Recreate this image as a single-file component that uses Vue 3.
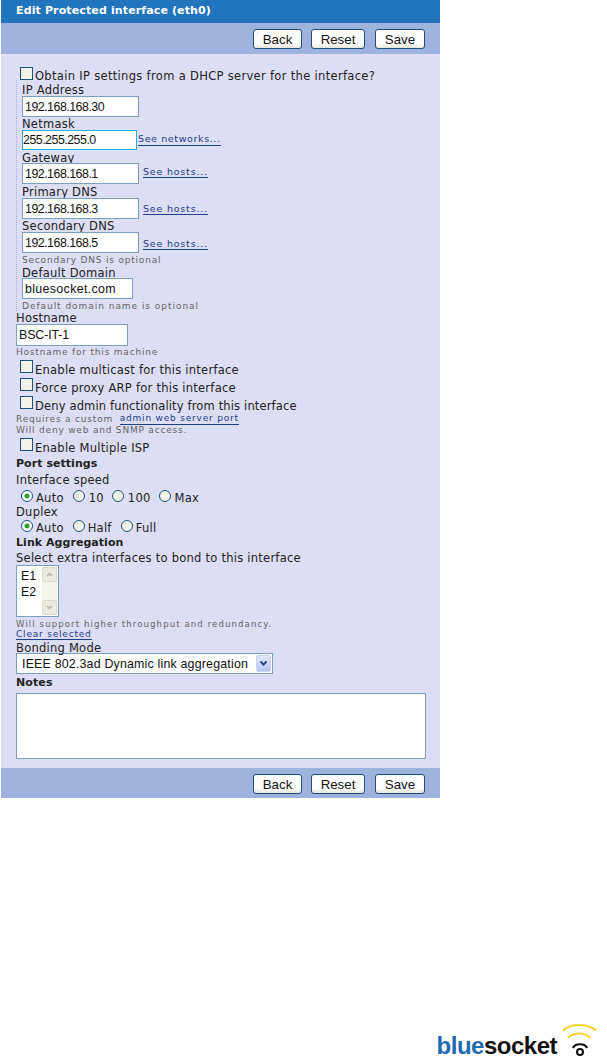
<script setup>
const buttons = ['Back', 'Reset', 'Save']
</script>

<template>
  <div class="page">
    <div class="panel">
      <h1 class="title">Edit Protected interface (eth0)</h1>
      <div class="bar top">
        <button v-for="b in buttons" :key="b" class="btn" :class="'btn-' + b">{{ b }}</button>
      </div>
      <div class="body">
        <label class="check first"><input type="checkbox" /><span>Obtain IP settings from a DHCP server for the interface?</span></label>
        <div class="dotted">
          <div class="lbl h13">IP Address</div>
          <div class="row"><input class="txt ip w117" value="192.168.168.30" /></div>
          <div class="lbl h13">Netmask</div>
          <div class="row"><input class="txt ip w115 focus" value="255.255.255.0" /><a class="link l1">See networks...</a></div>
          <div class="lbl h12">Gateway</div>
          <div class="row"><input class="txt ip w117" value="192.168.168.1" /><a class="link l2 m3">See hosts...</a></div>
          <div class="lbl h14">Primary DNS</div>
          <div class="row"><input class="txt ip w117" value="192.168.168.3" /><a class="link l2 m5">See hosts...</a></div>
          <div class="lbl h13">Secondary DNS</div>
          <div class="row"><input class="txt ip w117" value="192.168.168.5" /><a class="link l2 m6">See hosts...</a></div>
          <div class="hint h13">Secondary DNS is optional</div>
          <div class="lbl h12">Default Domain</div>
          <div class="row"><input class="txt dom w111" value="bluesocket.com" /></div>
          <div class="hint h12 low dense">Default domain name is optional</div>
        </div>
        <div class="lbl h13 out">Hostname</div>
        <input class="txt w112 tall out" value="BSC-IT-1" />
        <div class="hint h12 out">Hostname for this machine</div>
        <label class="check"><input type="checkbox" /><span>Enable multicast for this interface</span></label>
        <label class="check"><input type="checkbox" /><span>Force proxy ARP for this interface</span></label>
        <label class="check deny"><input type="checkbox" /><span>Deny admin functionality from this interface</span></label>
        <div class="hint h11 out gap1">Requires a custom <a class="inline port">admin web server port</a></div>
        <div class="hint h11 out">Will deny web and SNMP access.</div>
        <label class="check isp"><input type="checkbox" /><span>Enable Multiple ISP</span></label>
        <div class="head h17">Port settings</div>
        <div class="lbl h17 out">Interface speed</div>
        <div class="radios four">
          <label><input type="radio" name="s" checked /><span>Auto</span></label>
          <label><input type="radio" name="s" /><span>10</span></label>
          <label><input type="radio" name="s" /><span>100</span></label>
          <label><input type="radio" name="s" /><span>Max</span></label>
        </div>
        <div class="lbl h13 out flat">Duplex</div>
        <div class="radios">
          <label><input type="radio" name="d" checked /><span>Auto</span></label>
          <label><input type="radio" name="d" /><span>Half</span></label>
          <label><input type="radio" name="d" /><span>Full</span></label>
        </div>
        <div class="head h14">Link Aggregation</div>
        <div class="lbl h16 out dropped">Select extra interfaces to bond to this interface</div>
        <div class="listbox">
          <div class="opts"><div>E1</div><div>E2</div></div>
          <div class="scroll">
            <span class="sb"><svg width="7" height="5" viewBox="0 0 7 5"><path d="M1 4 3.5 1.5 6 4" fill="none" stroke="#b8b8a8" stroke-width="1.5" /></svg></span>
            <span class="sb"><svg width="7" height="5" viewBox="0 0 7 5"><path d="M1 1 3.5 3.5 6 1" fill="none" stroke="#b8b8a8" stroke-width="1.5" /></svg></span>
          </div>
        </div>
        <div class="hint h12 out wide low">Will support higher throughput and redundancy.</div>
        <div class="h12 out clearrow"><a class="inline">Clear selected</a></div>
        <div class="lbl h12 out">Bonding Mode</div>
        <div class="select">
          <span>IEEE 802.3ad Dynamic link aggregation</span>
          <span class="arrow"><svg width="9" height="7" viewBox="0 0 9 7"><path d="M1.5 1.5 4.5 4.5 7.5 1.5" fill="none" stroke="#2a4a8a" stroke-width="2" /></svg></span>
        </div>
        <div class="head h19 notes-head">Notes</div>
        <div class="notes"></div>
      </div>
      <div class="bar bottom">
        <button v-for="b in buttons" :key="b" class="btn" :class="'btn-' + b">{{ b }}</button>
      </div>
    </div>
    <div class="logo">
      <span class="brand"><span class="blue">blue</span>socket</span>
      <svg class="wifi" width="35" height="35" viewBox="0 0 35 35">
        <path d="M1 7.5C8 0 26 0 34 7.5" fill="none" stroke="#f6d32a" stroke-width="2" />
        <path d="M6 15C11 9 23 9 28 15" fill="none" stroke="#f6d32a" stroke-width="2" />
        <path d="M11 25C13 20 23 20 25 25" fill="none" stroke="#111" stroke-width="2.2" />
        <circle cx="18" cy="29" r="3" fill="none" stroke="#111" stroke-width="2" />
      </svg>
    </div>
  </div>
</template>

<style scoped>
.page {
  height: 1058px;
  display: flex;
  flex-direction: column;
  font-family: "DejaVu Sans", Verdana, sans-serif;
  font-size: 11.5px;
  letter-spacing: 0.25px;
  color: #222;
  overflow: hidden;
}
.panel { width: 439px; margin-left: 1px; }
.title {
  margin: 0;
  height: 23px;
  padding-left: 15px;
  background: #2175bc;
  color: #fff;
  font-size: 11px;
  font-weight: 700;
  letter-spacing: 0.13px;
  line-height: 21px;
}
.bar {
  background: #9db3de;
  display: flex;
  align-items: flex-start;
  padding-left: 252px;
  padding-top: 6px;
  box-sizing: border-box;
}
.bar.top { height: 31px; }
.bar.bottom { height: 30px; }
.btn {
  height: 20px;
  box-sizing: border-box;
  padding: 0;
  border: 1px solid #1d4f7c;
  border-radius: 3px;
  background: linear-gradient(#fff 70%, #e9e7dc);
  font-family: "Liberation Sans", Arial, sans-serif;
  font-size: 13.3px;
  color: #111;
}
.btn-Back { width: 49px; }
.btn-Reset { width: 54px; margin-left: 9px; }
.btn-Save { width: 50px; margin-left: 10px; }
.body {
  background: #ddddf5;
  height: 714px;
  box-sizing: border-box;
  padding-top: 12px;
}
.check { display: flex; align-items: flex-end; height: 18px; padding-left: 19px; }
.check input,
.radios input {
  appearance: none;
  margin: 0;
  background: #f2f2ea;
  border: 1px solid #1c5180;
  flex: none;
}
.check input { width: 13px; height: 13px; margin-right: 2px; margin-bottom: 3px; }
.check span { line-height: 14px; margin-bottom: -1px; }
.deny span { letter-spacing: 0.15px; }
.first { height: 17px; align-items: flex-start; }
.first input { margin: 1px 2px 0 0; }
.first span { margin: 3px 0 0; letter-spacing: 0.32px; }
.dotted {
  margin: -3px 0 0 15px;
  padding: 3px 0 0 5px;
  border-left: 1px dotted #9db3de;
}
.lbl, .hint { display: flex; align-items: center; white-space: pre; box-sizing: border-box; }
.lbl { line-height: 12px; padding-top: 1px; }
.flat { padding-top: 0; }
.dropped { padding-top: 2px; }
.out { margin-left: 15px; }
.hint { font-size: 9px; color: #666; letter-spacing: 0.8px; }
.low { padding-top: 1px; }
.dense { letter-spacing: 0.96px; }
.gap1 { margin-top: 1px; }
.h11 { height: 11px; }
.h12 { height: 12px; }
.h13 { height: 13px; }
.h14 { height: 14px; }
.h16 { height: 16px; }
.h17 { height: 17px; }
.h19 { height: 19px; }
.row { display: flex; align-items: flex-start; height: 21px; }
.txt {
  box-sizing: border-box;
  height: 21px;
  padding: 0 1px 0 2px;
  border: 1px solid #7a9fc0;
  background: #fff;
  outline: 0;
  font-family: "Liberation Sans", Arial, sans-serif;
  font-size: 12.4px;
  letter-spacing: -0.1px;
  color: #111;
  display: block;
}
.ip { letter-spacing: -0.5px; }
.dom { letter-spacing: 0.35px; }
.tall { height: 22px; }
.focus { border-color: #25b0ea; height: 20px; padding-left: 0; }
.w117 { width: 117px; }
.w115 { width: 115px; }
.w112 { width: 112px; }
.w111 { width: 111px; }
.link, .inline {
  color: #1b3f8b;
  text-decoration: none;
  border-bottom: 1px solid #1b3f8b;
  line-height: 11px;
}
.inline { font-size: 9px; letter-spacing: 0.8px; }
.port { margin-left: 3px; }
.link { font-size: 9.5px; letter-spacing: 0.8px; }
.l1 { margin-left: 1px; margin-top: 3px; padding-bottom: 1px; letter-spacing: 0.62px; }
.l2 { margin-left: 4px; }
.m3 { margin-top: 3px; }
.m5 { margin-top: 5px; }
.m6 { margin-top: 6px; }
.isp { height: 19px; }
.head { margin-left: 15px; font-weight: 700; font-size: 11px; letter-spacing: 0.05px; display: flex; align-items: center; box-sizing: border-box; padding-top: 1px; }
.notes-head { padding: 0 0 3px; letter-spacing: 0.1px; }
.radios { display: flex; padding-left: 20px; height: 17px; gap: 9px; align-items: flex-end; }
.radios label { display: flex; align-items: flex-end; }
.radios input { width: 12px; height: 12px; border-radius: 50%; margin-right: 3px; margin-bottom: 3px; }
.radios input:checked { background: radial-gradient(circle, #2ca02c 0 2px, #fff 3px); }
.radios span { line-height: 14px; }
.four { gap: 8px; }
.four label:first-child { margin-right: 1px; }
.four label:not(:first-child) input { margin-right: 4px; }
.listbox {
  margin-left: 15px;
  width: 43px;
  height: 52px;
  box-sizing: border-box;
  border: 1px solid #7a9fc0;
  background: #fff;
  display: flex;
  justify-content: space-between;
  font-family: "Liberation Sans", Arial, sans-serif;
  font-size: 12.4px;
  letter-spacing: 0;
  color: #111;
}
.opts { padding: 3px 0 0 4px; line-height: 15.5px; }
.scroll {
  width: 15px;
  margin: 1px 1px 1px 0;
  background: #f5f4ec;
  display: flex;
  flex-direction: column;
  justify-content: space-between;
}
.sb {
  height: 15px;
  background: #ebeadf;
  border: 1px solid #dddccb;
  box-sizing: border-box;
  border-radius: 2px;
  display: flex;
  align-items: center;
  justify-content: center;
}
.wide { font-size: 8.6px; letter-spacing: 1.08px; }
.clearrow { display: flex; align-items: flex-start; }
.clearrow .inline { line-height: 10px; }
.select {
  margin-left: 15px;
  width: 257px;
  height: 21px;
  box-sizing: border-box;
  border: 1px solid #7a9fc0;
  background: #fff;
  display: flex;
  align-items: center;
  justify-content: space-between;
  padding: 0 1px 0 5px;
  font-family: "Liberation Sans", Arial, sans-serif;
  font-size: 12.4px;
  letter-spacing: 0.19px;
  color: #111;
  white-space: nowrap;
}
.arrow {
  width: 15px;
  height: 17px;
  background: linear-gradient(#dfe8fb, #b4c8f3);
  border: 1px solid #c5d3ef;
  box-sizing: border-box;
  border-radius: 2px;
  display: flex;
  align-items: center;
  justify-content: center;
}
.notes {
  width: 410px;
  height: 66px;
  margin-left: 15px;
  box-sizing: border-box;
  border: 1px solid #7a9fc0;
  background: #fff;
}
.logo {
  margin-top: auto;
  align-self: flex-end;
  display: flex;
  align-items: flex-end;
  padding-right: 10px;
}
.brand {
  font-family: "Liberation Sans", Arial, sans-serif;
  font-size: 24px;
  font-weight: 700;
  line-height: 25px;
  color: #111;
  letter-spacing: -0.5px;
}
.blue { color: #1f6ab0; }
.wifi { margin-left: 5px; }
</style>

<style>
html, body { background: #fff; margin: 0; }
</style>
